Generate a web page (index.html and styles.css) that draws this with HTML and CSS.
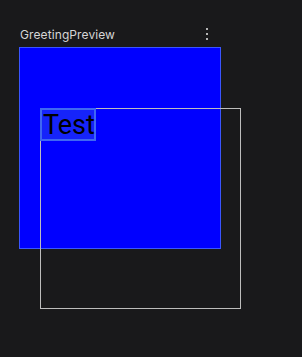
FILE: index.html
```html
<!DOCTYPE html>
<html lang="en">
<head>
    <meta charset="UTF-8">
    <meta name="viewport" content="width=device-width, initial-scale=1.0">
    <title>GreetingPreview</title>
    <link rel="stylesheet" href="styles.css">
</head>
<body>
    <div class="preview">
        <div class="preview-header">
            <span class="preview-title">GreetingPreview</span>
            <span class="menu-dots"><i></i><i></i><i></i></span>
        </div>
        <div class="canvas">
            <div class="surface"></div>
            <div class="bounds"></div>
            <div class="text-box">Test</div>
        </div>
    </div>
</body>
</html>
```

FILE: styles.css
```css
body {
    margin: 0;
    background: #19191b;
    font-family: 'Inter', 'Roboto', sans-serif;
    height: 100vh;
}
.preview {
    padding: 25px 0 0 19px;
    width: 202px;
}
.preview-header {
    display: flex;
    align-items: center;
    justify-content: space-between;
    height: 18px;
    padding-left: 1px;
    margin-bottom: 4px;
}
.preview-title {
    color: #d6d6d6;
    font-size: 12px;
    letter-spacing: 0.1px;
}
.menu-dots {
    display: flex;
    flex-direction: column;
    gap: 3px;
    margin-right: 13px;
}
.menu-dots i {
    width: 2px;
    height: 2px;
    background: #b4b4b4;
}
.canvas {
    position: relative;
    width: 202px;
    height: 202px;
}
.surface {
    width: 202px;
    height: 202px;
    box-sizing: border-box;
    background: #0000ff;
    border: 1px solid #3a55ff;
}
.bounds {
    position: absolute;
    left: 21px;
    top: 61px;
    width: 199px;
    height: 199px;
    border: 1px solid #bdbdbd;
}
.text-box {
    position: absolute;
    left: 21px;
    top: 61px;
    width: 52px;
    height: 29px;
    border: 2px solid #3f68f2;
    background: rgba(64, 104, 242, 0.35);
    color: #000;
    font-family: 'Roboto', sans-serif;
    font-size: 27px;
    line-height: 30px;
    text-indent: 1px;
    white-space: nowrap;
}
```
